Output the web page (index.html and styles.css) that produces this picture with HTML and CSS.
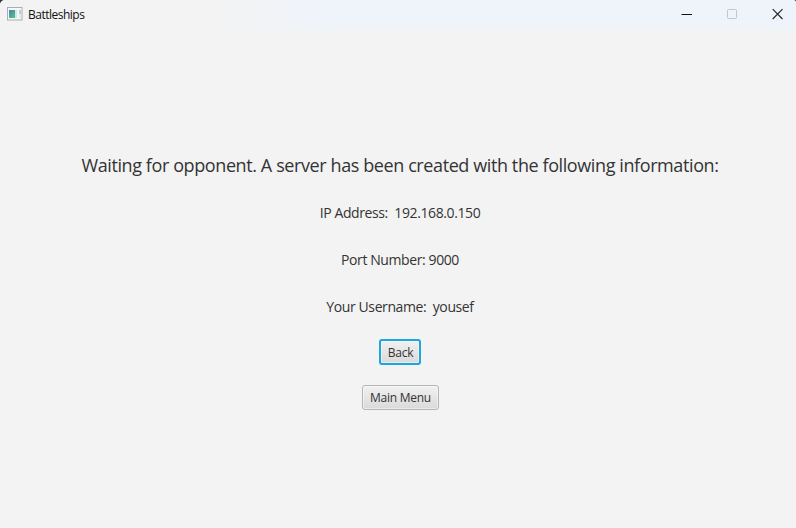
FILE: index.html
```html
<!DOCTYPE html>
<html lang="en">
<head>
<meta charset="utf-8">
<title>Battleships</title>
<link rel="stylesheet" href="styles.css">
</head>
<body>
<div class="window">
  <header class="titlebar">
    <svg class="app-icon" width="16" height="14" viewBox="0 0 16 14">
      <defs><linearGradient id="pane" x1="0" y1="0" x2="0.6" y2="1"><stop offset="0" stop-color="#4d82a8"/><stop offset="1" stop-color="#58b891"/></linearGradient></defs>
      <rect x=".5" y=".5" width="14.5" height="12.5" fill="#f5f7f8" stroke="#a9adb5"/>
      <rect x="2" y="3" width="6" height="8" fill="url(#pane)"/>
      <rect x="8" y="3" width="2" height="8" fill="#c8ead9"/>
      <rect x="12" y="3" width="2" height="4" fill="#b9cfe0"/>
      <rect x="12" y="7" width="2" height="4" fill="#e2eee9"/>
    </svg>
    <span class="caption">Battleships</span>
    <div class="controls">
      <svg width="46" height="28" viewBox="0 0 46 28"><path d="M21.5 14.5h10.5" stroke="#111" fill="none"/></svg>
      <svg width="46" height="28" viewBox="0 0 46 28"><rect x="21.5" y="9.5" width="9" height="9" rx="1" stroke="#c1c5ce" fill="none"/></svg>
      <svg width="46" height="28" viewBox="0 0 46 28"><path d="M20.7 9.2l9.8 9.8M30.5 9.2l-9.8 9.8" stroke="#24262a" stroke-width="1.15" fill="none"/></svg>
    </div>
  </header>
  <main class="content">
    <h1 class="heading">Waiting for opponent. A server has been created with the following information:</h1>
    <p class="info ip">IP Address:&nbsp; 192.168.0.150</p>
    <p class="info port">Port Number: 9000</p>
    <p class="info user">Your Username:&nbsp; yousef</p>
    <button class="button back">Back</button>
    <button class="button menu">Main Menu</button>
  </main>
</div>
</body>
</html>
```
FILE: styles.css
```css
* { box-sizing: border-box; }
body { margin: 0; background: #30343a; font-family: "Open Sans", "Noto Sans", sans-serif; }
.window {
  width: 796px; height: 528px; overflow: hidden;
  display: flex; flex-direction: column;
  background: #f3f3f3; border-radius: 5px 3px 0 0;
}
.titlebar {
  height: 30px; flex: none; display: flex; align-items: flex-start;
  padding-left: 7px;
  background: linear-gradient(90deg, #f3f3f3 0, #f3f3f3 210px, #eff3fa 330px, #eff3fa 100%);
}
.app-icon { margin-top: 7px; }
.caption { margin: 6px 0 0 5px; font-size: 12px; line-height: 18px; color: #111; letter-spacing: -0.5px; white-space: nowrap; }
.controls { display: flex; margin-left: auto; margin-right: -2px; }
.content {
  display: flex; flex-direction: column; align-items: center;
  padding: 122px 0 0 4px; color: #333;
}
.heading, .info { margin: 0; font-weight: 400; white-space: nowrap; }
.heading { font-size: 18px; line-height: 26px; letter-spacing: -0.4px; }
.info { font-size: 14px; line-height: 20px; margin-bottom: 27px; letter-spacing: -0.4px; }
.ip { margin-top: 25px; }
.user { margin-bottom: 22px; }
.button {
  margin: 0 0 20px; padding: 0; height: 25px;
  font: 12px/20px "Open Sans", "Noto Sans", sans-serif; color: #333;
  border: 1px solid #b5b5b5; border-radius: 3px;
  background: linear-gradient(#f1f1f1, #dadada);
  box-shadow: inset 0 0 0 1px rgba(255,255,255,.45);
}
.back { width: 42px; height: 26px; padding: 1px 0 0 1px; border: 2px solid #1aa9da; letter-spacing: -0.3px; }
.menu { width: 77px; margin-left: 1px; letter-spacing: -0.25px; }
```
